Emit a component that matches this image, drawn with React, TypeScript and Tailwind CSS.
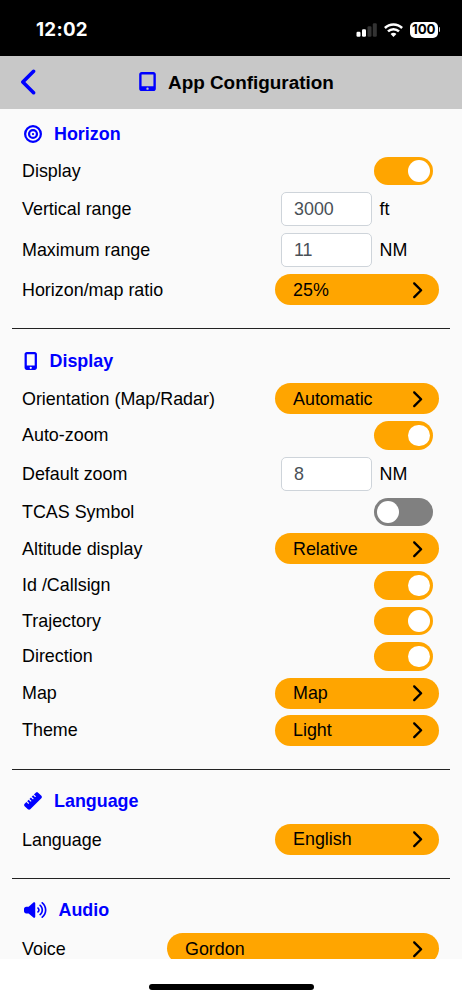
import { ReactNode, useState } from "react";
import {
    FaBullseye,
    FaChevronLeft,
    FaChevronRight,
    FaMobileScreenButton,
    FaRuler,
    FaTabletScreenButton,
    FaVolumeHigh,
} from "react-icons/fa6";

const StatusBar = () => (
    <div className="flex h-[55.5px] shrink-0 items-center justify-between bg-black pr-[22px] pl-9 pt-[4px] text-white">
        <span className="pt-[1px] font-['Inter'] text-[18.7px] font-bold tracking-[0.3px]">12:02</span>
        <div className="flex items-center gap-[7px]">
            <svg width="21" height="14" viewBox="0 0 21 14">
                <rect x="0.5" y="8.8" width="4" height="5" rx="1.2" fill="#fff" />
                <rect x="6" y="6.3" width="4" height="7.5" rx="1.2" fill="#fff" />
                <rect x="11.5" y="3.3" width="4" height="10.5" rx="1.2" fill="#333" />
                <rect x="16.8" y="0.3" width="4" height="13.5" rx="1.2" fill="#333" />
            </svg>
            <svg width="19" height="14" viewBox="0 0 19 14" fill="none" stroke="#fff" strokeWidth="2.5">
                <path d="M0.9 5 C5.7 0.2 13.3 0.2 18.1 5" />
                <path d="M4 8.4 C7.1 5.4 11.9 5.4 15 8.4" />
                <path d="M9.5 14 L6.6 11 C8.2 9.4 10.8 9.4 12.4 11 Z" fill="#fff" stroke="none" />
            </svg>
            <div className="flex items-center gap-px">
                <div className="flex h-[15.5px] w-[27.5px] items-center justify-center rounded-[5px] bg-white font-['Inter'] text-[13.3px] font-bold leading-none text-black">
                    100
                </div>
                <div className="h-[5px] w-[1.5px] rounded-r-full bg-white/80" />
            </div>
        </div>
    </div>
);

const Toggle = (props: { label: string; defaultOn?: boolean }) => {
    const [on, setOn] = useState(props.defaultOn ?? false);

    return (
        <div className="flex h-[35.55px] items-center justify-between pr-[29px] pl-[22px]">
            <span className="pt-[1px]">{props.label}</span>
            <button
                role="switch"
                aria-checked={on}
                aria-label={props.label}
                onClick={() => setOn(!on)}
                className={"flex h-[28.5px] w-[59.3px] items-center rounded-full px-[3.5px] " + (on ? "justify-end bg-[#ffa500]" : "justify-start bg-[#808080]")}
            >
                <span className="size-[21.5px] rounded-full bg-white" />
            </button>
        </div>
    );
};

const NumberField = (props: { label: string; value: string; unit: string }) => (
    <div className="flex h-[41.2px] items-center pl-[22px]">
        <span className="w-[259px] pt-[1px]">{props.label}</span>
        <input
            aria-label={props.label}
            defaultValue={props.value}
            className="h-[34px] w-[91px] rounded-[5px] border border-[#ced4da] bg-white px-3 pt-[1px] text-[#495057] outline-none"
        />
        <span className="pt-[1px] pl-[7.5px]">{props.unit}</span>
    </div>
);

const SelectField = (props: { label: string; value: string; wide?: boolean }) => (
    <div className="flex h-[37.65px] items-center justify-between pr-[23px] pl-[22px]">
        <span className="pt-[1px]">{props.label}</span>
        <button className={"flex h-[31px] items-center justify-between rounded-full bg-[#ffa500] pr-[16px] pl-[18px] " + (props.wide ? "w-[272px]" : "w-[164px]")}>
            <span className="pt-[1px]">{props.value}</span>
            <FaChevronRight className="h-[18.5px] w-[13px]" />
        </button>
    </div>
);

const Section = (props: { title: string; icon: ReactNode; children: ReactNode }) => (
    <section>
        <h2 className="flex h-[39px] items-center gap-[12px] pl-[24px] font-bold text-[#0000ff]">
            {props.icon}
            <span className="pt-[1.5px]">{props.title}</span>
        </h2>
        {props.children}
    </section>
);

const Divider = () => <hr className="mx-3 mt-[19px] mb-[12.4px] border-t border-[#222]" />;

export default function App() {
    return (
        <div className="flex h-[1000px] w-[462px] flex-col overflow-hidden bg-white font-['Liberation_Sans',Arial,sans-serif] text-[17.9px] leading-[1.2] text-black">
            <StatusBar />
            <header className="flex h-[53.5px] shrink-0 items-center bg-[#c8c8c8]">
                <button aria-label="Back" className="w-[139px] pl-[21px] text-[#0000ff]">
                    <FaChevronLeft className="h-[30px] w-[18px]" />
                </button>
                <FaTabletScreenButton className="mb-[1.5px] h-[19px] w-[17px] text-[#0000ff]" />
                <h1 className="pt-[2px] pl-[12px] text-[18.9px] font-bold">App Configuration</h1>
            </header>
            <main className="h-[850px] shrink-0 overflow-hidden bg-[#fafafa] pt-[5.1px]">
                <Section title="Horizon" icon={<FaBullseye className="size-[18px]" />}>
                    <Toggle label="Display" defaultOn />
                    <NumberField label="Vertical range" value="3000" unit="ft" />
                    <NumberField label="Maximum range" value="11" unit="NM" />
                    <SelectField label="Horizon/map ratio" value="25%" />
                </Section>
                <Divider />
                <Section title="Display" icon={<FaMobileScreenButton className="h-[18px] w-[13.5px]" />}>
                    <SelectField label="Orientation (Map/Radar)" value="Automatic" />
                    <Toggle label="Auto-zoom" defaultOn />
                    <NumberField label="Default zoom" value="8" unit="NM" />
                    <Toggle label="TCAS Symbol" />
                    <SelectField label="Altitude display" value="Relative" />
                    <Toggle label="Id /Callsign" defaultOn />
                    <Toggle label="Trajectory" defaultOn />
                    <Toggle label="Direction" defaultOn />
                    <SelectField label="Map" value="Map" />
                    <SelectField label="Theme" value="Light" />
                </Section>
                <Divider />
                <Section title="Language" icon={<FaRuler className="size-[18px]" />}>
                    <SelectField label="Language" value="English" />
                </Section>
                <Divider />
                <Section title="Audio" icon={<FaVolumeHigh className="h-[18px] w-[22.5px]" />}>
                    <SelectField label="Voice" value="Gordon" wide />
                </Section>
            </main>
            <footer className="flex h-[41px] shrink-0 items-start justify-center pt-[25px]">
                <div className="h-[6px] w-[165px] rounded-full bg-black" />
            </footer>
        </div>
    );
}
